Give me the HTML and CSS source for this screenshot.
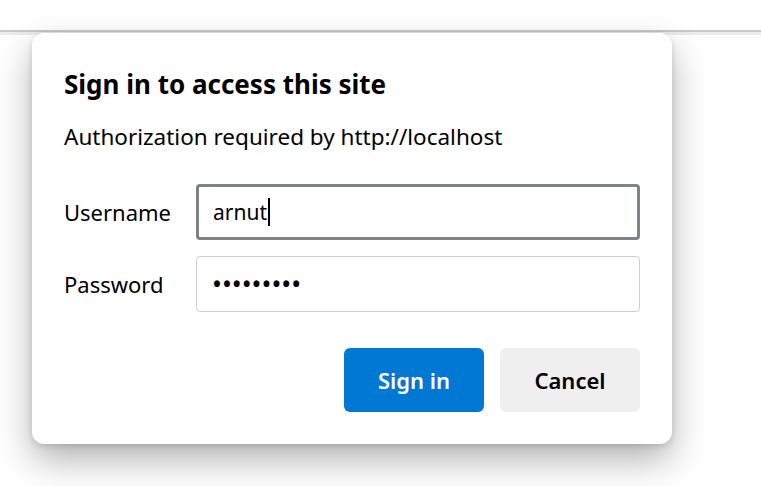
FILE: index.html
```html
<!DOCTYPE html>
<html lang="en">
<head>
<meta charset="utf-8">
<title>Sign in</title>
<link rel="stylesheet" href="styles.css">
</head>
<body>
<div class="topbar"></div>
<div class="page"></div>
<div class="dialog" role="dialog" aria-labelledby="dlg-title">
  <h1 class="title" id="dlg-title">Sign in to access this site</h1>
  <p class="desc">Authorization required by http://localhost</p>
  <div class="fields">
    <div class="row">
      <span class="label">Username</span>
      <div class="field focused"><span class="value">arnut</span><span class="caret"></span></div>
    </div>
    <div class="row">
      <span class="label">Password</span>
      <div class="field"><span class="dots">•••••••••</span></div>
    </div>
  </div>
  <div class="actions">
    <button class="btn primary">Sign in</button>
    <button class="btn secondary">Cancel</button>
  </div>
</div>
</body>
</html>
```
FILE: styles.css
```css
html, body {
  margin: 0;
  padding: 0;
  background: #ffffff;
  width: 761px;
  height: 486px;
  overflow: hidden;
  font-family: "Noto Sans", "Open Sans", sans-serif;
  color: #000;
}

.topbar {
  height: 30px;
  background: #ffffff;
  border-bottom: 2px solid #c8c8c8;
}

.page {
  height: 3px;
  background: #ececec;
}

.dialog {
  position: absolute;
  left: 32px;
  top: 33px;
  width: 640px;
  height: 411px;
  box-sizing: border-box;
  padding: 0 32px;
  background: #ffffff;
  border-radius: 12px;
  box-shadow: 0 16px 36px rgba(0, 0, 0, 0.3), 0 2px 6px rgba(0, 0, 0, 0.14);
  display: flex;
  flex-direction: column;
}

.title {
  margin: 35px 0 0 0;
  font-size: 26px;
  font-weight: 700;
  line-height: 32px;
}

.desc {
  margin: 22px 0 0 0;
  font-size: 22.5px;
  line-height: 30px;
}

.fields {
  margin-top: 32px;
  display: flex;
  flex-direction: column;
  gap: 16px;
}

.row {
  display: flex;
  align-items: center;
}

.label {
  width: 132px;
  font-size: 22px;
}

.field {
  flex: 1;
  height: 56px;
  box-sizing: border-box;
  border: 1px solid #cfcfcf;
  border-radius: 4px;
  display: flex;
  align-items: center;
  padding-left: 16px;
  font-size: 21px;
}

.field.focused {
  border: 3px solid #7d8388;
  padding-left: 14px;
}

.caret {
  display: inline-block;
  width: 2px;
  height: 28px;
  background: #000;
  margin-left: 1px;
}

.dots {
  letter-spacing: 2px;
  font-size: 21px;
  font-weight: 700;
}

.actions {
  margin-top: 36px;
  display: flex;
  justify-content: flex-end;
  gap: 16px;
}

.btn {
  width: 140px;
  height: 64px;
  border: none;
  border-radius: 6px;
  font-family: inherit;
  font-size: 22px;
  font-weight: 600;
  cursor: pointer;
}

.btn.primary {
  background: #0078d4;
  color: #ffffff;
}

.btn.secondary {
  background: #efefef;
  color: #000;
}
```
